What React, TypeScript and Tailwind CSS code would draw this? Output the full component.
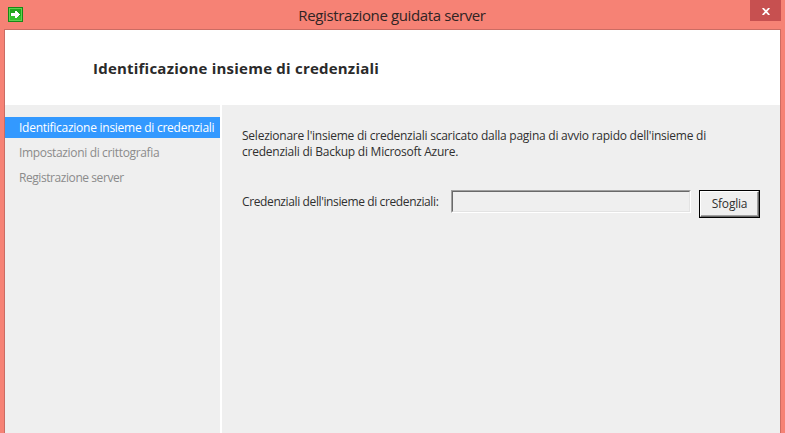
const steps = [
  { label: "Impostazioni di crittografia", spacing: "tracking-[-0.34px]" },
  { label: "Registrazione server", spacing: "tracking-[-0.43px]" },
];

function TitleBar() {
  return (
    <header className="flex h-[29px] shrink-0 items-start justify-between">
      <svg className="mt-[7px] ml-2 h-[15px] w-[15px]" viewBox="0 0 15 15" shapeRendering="crispEdges">
        <rect width="15" height="15" fill="#168a16" />
        <rect x="1" y="1" width="13" height="13" fill="#62cf50" />
        <rect x="2" y="2" width="11" height="11" fill="#22a51d" />
        <rect x="2" y="9" width="11" height="4" fill="#35bf2a" />
        <path d="M3 6h4V4h2v1h1v1h1v1h1v1h-1v1h-1v1H9v1H7V9H3z" fill="#fff" />
      </svg>
      <h1 className="mt-1 ml-[11px] text-[15px] leading-[22px] tracking-[-0.38px] whitespace-nowrap text-[#302424]">
        Registrazione guidata server
      </h1>
      <button aria-label="Chiudi" className="mr-1 flex h-[21px] w-[31px] items-center justify-center bg-[#c75050] pt-0.5 pl-0.5">
        <svg className="h-[7px] w-2" viewBox="0 0 8 7">
          <path d="M.7 0 7.3 7M7.3 0 .7 7" stroke="#fff" strokeWidth="1.8" />
        </svg>
      </button>
    </header>
  );
}

export default function App() {
  return (
    <div className="flex h-[433px] w-[785px] flex-col overflow-hidden bg-[#f68275] font-['Open_Sans',sans-serif] text-[#303030]">
      <TitleBar />
      <div className="mx-1 flex flex-1 flex-col border-x border-t border-[#cb6c63] bg-[#efefef]">
        <div className="h-[75px] shrink-0 bg-white pt-[27px] pl-[88px]">
          <h2 className="text-[15px] leading-[22px] font-bold tracking-[0.22px] whitespace-nowrap text-[#2a2a2a]">
            Identificazione insieme di credenziali
          </h2>
        </div>
        <div className="flex flex-1">
          <nav className="w-[217px] shrink-0 border-r-2 border-white pt-3 text-[12px] whitespace-nowrap">
            <div className="h-[21px] bg-[#3399ff] pl-[14px] leading-[21px] tracking-[-0.26px] text-white">
              Identificazione insieme di credenziali
            </div>
            <div className="pt-[2px] pl-[14px] leading-[25px] text-[#8b8b8b]">
              {steps.map((step) => (
                <div key={step.label} className={step.spacing}>
                  {step.label}
                </div>
              ))}
            </div>
          </nav>
          <main className="flex-1 pt-[23px] pl-5 text-[12px]">
            <p className="leading-4 tracking-[-0.24px] whitespace-nowrap">
              Selezionare l'insieme di credenziali scaricato dalla pagina di avvio rapido dell'insieme di
              <br />
              credenziali di Backup di Microsoft Azure.
            </p>
            <div className="mt-[30px] flex items-start">
              <label htmlFor="vault" className="w-[209px] pt-1 leading-4 tracking-[-0.38px] whitespace-nowrap">
                Credenziali dell'insieme di credenziali:
              </label>
              <div className="h-[23px] w-60 border border-t-[#a0a0a0] border-r-white border-b-white border-l-[#a0a0a0]">
                <input
                  id="vault"
                  className="block h-full w-full border border-t-[#696969] border-r-[#e3e3e3] border-b-[#e3e3e3] border-l-[#696969] bg-transparent"
                />
              </div>
              <div className="ml-2 h-7 w-[61px] border border-black">
                <button className="h-full w-full border border-t-white border-r-[#696969] border-b-[#696969] border-l-white text-[12px]">
                  <span className="block h-full w-full border-r border-b border-[#a0a0a0] pl-px leading-[24px] tracking-[-0.2px]">
                    Sfoglia
                  </span>
                </button>
              </div>
            </div>
          </main>
        </div>
      </div>
    </div>
  );
}
